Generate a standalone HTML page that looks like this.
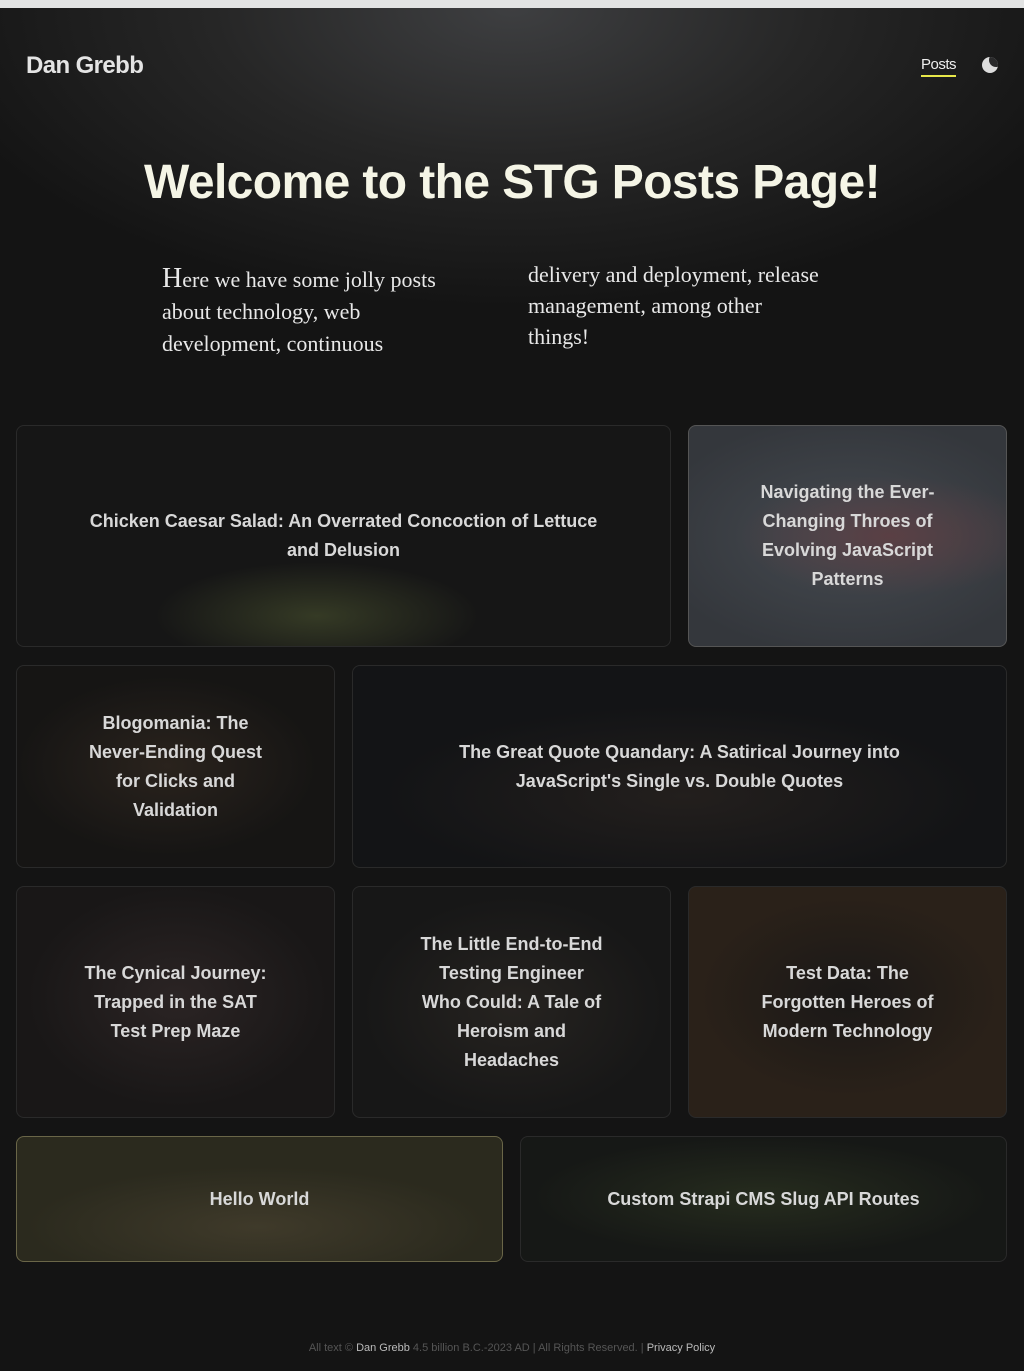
<!DOCTYPE html>
<html><head><meta charset="utf-8"><style>
*{margin:0;padding:0;box-sizing:border-box}
body{width:1024px;height:1371px;background:#141414;font-family:"Liberation Sans",sans-serif;position:relative;overflow:hidden}
.top{position:absolute;left:0;top:0;width:1024px;height:8px;background:#e2e3e3}
.hero{position:absolute;left:0;top:8px;width:1024px;height:480px;background:radial-gradient(ellipse 600px 300px at 512px 0,#3e3f41 0%,#262626 50%,#141414 100%)}
.logo{position:absolute;left:26px;top:52px;font-size:24px;font-weight:bold;color:#e4e4e4;letter-spacing:-0.6px}
.nav{position:absolute;left:921px;top:56px;font-size:15px;color:#eee;border-bottom:2px solid #e8e84a;padding-bottom:2px;letter-spacing:-0.5px}
.moon{position:absolute;left:982px;top:57px;width:16px;height:16px;border-radius:50%;background:#ddd;overflow:hidden}
.moon:after{content:"";position:absolute;left:7px;top:-4px;width:14px;height:14px;border-radius:50%;background:#2a2a2b}
h1{position:absolute;left:0;width:1024px;top:155px;text-align:center;font-size:48px;color:#f5f5e6;letter-spacing:-0.6px;font-weight:900}
.p{position:absolute;font-family:"Liberation Serif",serif;font-size:22px;color:#e8e8e8;line-height:31px}
.card{position:absolute;border:1px solid #2a2a2a;border-radius:8px;display:flex;align-items:center;justify-content:center;text-align:center;color:#d8d8d8;font-weight:bold;font-size:18px;line-height:29px;padding:0 60px;overflow:hidden}
.foot{position:absolute;left:0;width:1024px;top:1342px;text-align:center;font-size:11px;color:#555}
.foot b{color:#bbb;font-weight:normal}
</style></head><body>
<div class="top"></div><div class="hero"></div>
<div class="logo">Dan Grebb</div>
<div class="nav">Posts</div><div class="moon"></div>
<h1>Welcome to the STG Posts Page!</h1>
<div class="p" style="left:162px;top:263px;width:310px;line-height:32px"><span style="font-size:28px">H</span>ere we have some jolly posts about technology, web development, continuous</div>
<div class="p" style="left:528px;top:259px;width:300px">delivery and deployment, release management, among other things!</div>

<div class="card" style="left:16px;top:425px;width:655px;height:222px;background:radial-gradient(ellipse 180px 60px at 300px 190px,#353a25,#161616 90%);padding:0 70px">Chicken Caesar Salad: An Overrated Concoction of Lettuce and Delusion</div>
<div class="card" style="left:688px;top:425px;width:319px;height:222px;background:radial-gradient(ellipse 150px 60px at 200px 110px,#5a3f44,transparent),radial-gradient(ellipse 200px 120px at 160px 110px,#454a50,#34373c);border-color:#555">Navigating the Ever-Changing Throes of Evolving JavaScript Patterns</div>
<div class="card" style="left:16px;top:665px;width:319px;height:203px;background:radial-gradient(ellipse 150px 90px at 150px 100px,#2a231d,#161514)">Blogomania: The Never-Ending Quest for Clicks and Validation</div>
<div class="card" style="left:352px;top:665px;width:655px;height:203px;background:radial-gradient(ellipse 300px 90px at 330px 130px,#231f1d,#131416);padding:0 100px">The Great Quote Quandary: A Satirical Journey into JavaScript's Single vs. Double Quotes</div>
<div class="card" style="left:16px;top:886px;width:319px;height:232px;background:radial-gradient(ellipse 150px 110px at 160px 110px,#2b2424,#191717);padding:0 66px">The Cynical Journey: Trapped in the SAT Test Prep Maze</div>
<div class="card" style="left:352px;top:886px;width:319px;height:232px;background:radial-gradient(ellipse 150px 110px at 160px 120px,#262320,#171717);padding:0 66px">The Little End-to-End Testing Engineer Who Could: A Tale of Heroism and Headaches</div>
<div class="card" style="left:688px;top:886px;width:319px;height:232px;background:radial-gradient(ellipse 150px 100px at 160px 110px,#1a1817,#2a2119)">Test Data: The Forgotten Heroes of Modern Technology</div>
<div class="card" style="left:16px;top:1136px;width:487px;height:126px;background:radial-gradient(ellipse 230px 60px at 240px 90px,#3f3a2a,#2b2a1e);border-color:#6a6648">Hello World</div>
<div class="card" style="left:520px;top:1136px;width:487px;height:126px;background:radial-gradient(ellipse 230px 60px at 240px 60px,#262c1e,#161816)">Custom Strapi CMS Slug API Routes</div>

<div class="foot">All text © <b>Dan Grebb</b> 4.5 billion B.C.-2023 AD | All Rights Reserved. | <b>Privacy Policy</b></div>
</body></html>
